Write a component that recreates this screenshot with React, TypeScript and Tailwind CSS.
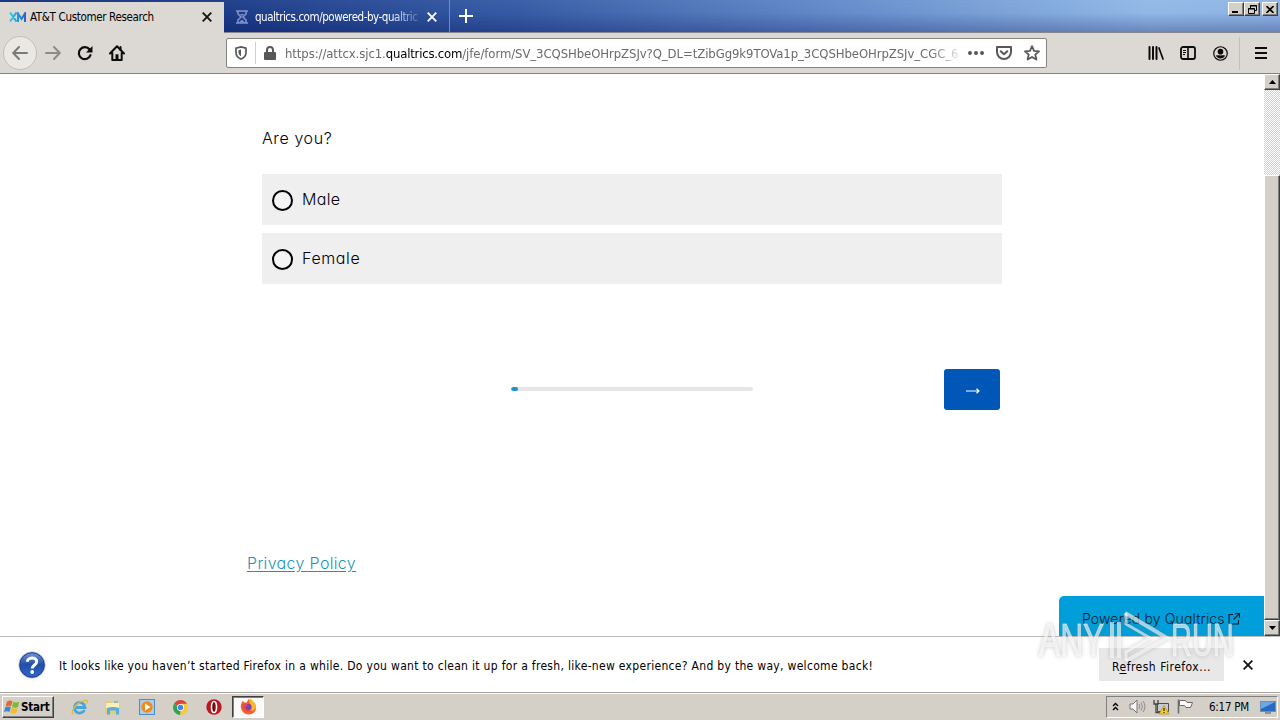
import React from "react";

const ui = "font-['DejaVu_Sans_Condensed','DejaVu_Sans',sans-serif] [font-stretch:condensed]";
const survey = "font-[Inter,'Open_Sans',sans-serif] font-light [font-feature-settings:'cv11','ss03']";
const bevel =
  "bg-[#d4d0c8] border border-t-white border-l-white border-r-[#404040] border-b-[#404040] shadow-[inset_-1px_-1px_0_#808080]";

function Close({ className = "" }: { className?: string }) {
  return (
    <svg className={className} width="10" height="10" viewBox="0 0 10 10" fill="none" stroke="currentColor" strokeWidth="1.8">
      <path d="M.7.7l8.6 8.6M9.3.7L.7 9.3" />
    </svg>
  );
}

function TabStrip() {
  return (
    <header className="flex h-[33px] shrink-0 items-start border-b border-[#85878c] bg-[linear-gradient(to_bottom,rgba(255,255,255,.04),rgba(0,0,30,0)_40%,rgba(0,10,80,.28)),linear-gradient(to_right,#14307c_0,#1c3b88_220px,#365ba5_520px,#6288c8_820px,#91b8e6_1150px,#8fb4e4_1280px)]">
      <div className="mt-[2px] flex h-[31px] w-[224px] shrink-0 items-center bg-[#dcd8d3] pb-[1px] pl-[9px]">
        <svg width="17" height="10" viewBox="0 0 17 10" fill="none" strokeWidth="2">
          <defs>
            <linearGradient id="xm" x1="0" x2="1">
              <stop offset="0" stopColor="#35c9d8" />
              <stop offset=".5" stopColor="#1e9be0" />
              <stop offset="1" stopColor="#2b63c8" />
            </linearGradient>
          </defs>
          <path d="M1 .5L7.500 9.500M7.500.5L1 9.500M9 10V1.500l3.500 5.500L16 1.500V10" stroke="url(#xm)" />
        </svg>
        <span className={`ml-[4px] text-[11.5px] leading-4 tracking-[-0.33px] whitespace-nowrap text-black ${ui}`}>AT&amp;T Customer Research</span>
        <Close className="mr-[12px] ml-auto text-[#111]" />
      </div>
      <div className="flex h-[32px] w-[226px] shrink-0 items-center border-r border-[#7589bb] pt-[2px] pl-[12px] text-white">
        <svg width="12" height="14" viewBox="0 0 12 14" fill="none" stroke="#8195cb" strokeWidth="1.6">
          <path d="M0 1h12M0 13h12M2 1v3l3 3-3 3v3M10 1v3L7 7l3 3v3" />
          <path d="M3 12.500l3-3 3 3zM4 4h4L6 6z" fill="#8195cb" stroke="none" />
        </svg>
        <span className={`ml-[7px] w-[164px] overflow-hidden text-[11.5px] leading-4 tracking-[-0.45px] whitespace-nowrap [mask-image:linear-gradient(to_right,#000_135px,transparent_170px)] ${ui}`}>
          qualtrics.com/powered-by-qualtric
        </span>
        <Close className="ml-[8px]" />
      </div>
      <svg className="mt-[9px] ml-[9px]" width="14" height="14" viewBox="0 0 14 14" stroke="#fff" strokeWidth="2">
        <path d="M7 0v14M0 7h14" />
      </svg>
      <div className="mt-[2px] mr-[2px] ml-auto flex">
        <div className={`flex h-[14px] w-[16px] items-end pb-[2px] pl-[3px] ${bevel}`}>
          <i className="h-[2px] w-[6px] bg-black" />
        </div>
        <div className={`flex h-[14px] w-[16px] items-center justify-center ${bevel}`}>
          <svg width="9" height="9" viewBox="0 0 9 9" fill="none" stroke="#000">
            <path d="M2.500 3V.5h6v5H6.500M2 1h7M.5 3.500h6v5h-6zM0 4h7" />
          </svg>
        </div>
        <div className={`ml-[2px] flex h-[14px] w-[16px] items-center justify-center ${bevel}`}>
          <svg width="8" height="7" viewBox="0 0 8 7" stroke="#000" strokeWidth="1.6">
            <path d="M.5 0l7 7M7.500 0l-7 7" />
          </svg>
        </div>
      </div>
    </header>
  );
}

function NavBar() {
  return (
    <nav className="flex h-[41px] shrink-0 items-center border-b border-[#84827e] bg-[#dcd8d3]">
      <div className="ml-[3px] flex size-[34px] shrink-0 items-center justify-center rounded-full border border-[#c2beba] bg-[#eae8e5]">
        <svg width="16" height="14" viewBox="0 0 16 14" fill="none" stroke="#7c7a77" strokeWidth="2" strokeLinecap="round" strokeLinejoin="round">
          <path d="M15 7H1.500M7 1L1.200 7 7 13" />
        </svg>
      </div>
      <svg className="ml-[8px] shrink-0" width="16" height="14" viewBox="0 0 16 14" fill="none" stroke="#8d8a87" strokeWidth="2" strokeLinecap="round" strokeLinejoin="round">
        <path d="M1 7h13.500M9 1l5.800 6L9 13" />
      </svg>
      <svg className="ml-[16px] shrink-0" width="16" height="16" viewBox="0 0 16 16" fill="none" stroke="#0c0c0d" strokeWidth="2.200" strokeLinecap="round">
        <path d="M13.500 10.200A6 6 0 1 1 12.600 4.500" />
        <path d="M15.500 1v6.500H9z" fill="#0c0c0d" stroke="none" />
      </svg>
      <svg className="ml-[16px] shrink-0" width="16" height="16" viewBox="0 0 16 16" fill="none" stroke="#0c0c0d" strokeWidth="2" strokeLinecap="round" strokeLinejoin="round">
        <path d="M1 8.500L8 1.300l7 7.200M3.300 8v7h9.400V8" />
        <path d="M6.500 14.500V9.300h3v5.200z" fill="#0c0c0d" stroke="none" />
        <path d="M11.500 2v3" />
      </svg>
      <div className="ml-[101px] flex h-[30px] w-[821px] shrink-0 items-center rounded-[2px] border border-[#858380] bg-white">
        <svg className="ml-[8px]" width="12" height="14" viewBox="0 0 12 14" fill="none" stroke="#58585a" strokeWidth="1.700">
          <path d="M6 .9L11 2.200v4.300c0 3-2 5.300-5 6.500C3 11.800 1 9.500 1 6.500V2.200z" />
          <path d="M6 3.500v6.800C4.300 9.300 3.500 8 3.500 6.500V4.200z" fill="#58585a" stroke="none" />
        </svg>
        <i className="ml-[8px] h-[22px] w-px bg-[#cfcfcf]" />
        <svg className="ml-[8px]" width="12" height="14" viewBox="0 0 12 14">
          <path d="M3 7V4a3 3 0 0 1 6 0v3" fill="none" stroke="#58585a" strokeWidth="2" />
          <rect y="6" width="12" height="8" rx="1" fill="#58585a" />
        </svg>
        <div className={`mt-[2px] ml-[9px] w-[675px] overflow-hidden text-[13px] leading-5 tracking-[-0.08px] whitespace-nowrap text-[#6a6a6a] [mask-image:linear-gradient(to_right,#000_645px,transparent_680px)] ${ui}`}>
          https://attcx.sjc1.<span className="tracking-[-0.2px] text-black">qualtrics.com</span>/jfe/form/SV_3CQSHbeOHrpZSJv?Q_DL=tZibGg9k9TOVa1p_3CQSHbeOHrpZSJv_CGC_6
        </div>
        <svg className="ml-[8px]" width="16" height="4" viewBox="0 0 16 4" fill="#58585a">
          <circle cx="2" cy="2" r="2" />
          <circle cx="8" cy="2" r="2" />
          <circle cx="14" cy="2" r="2" />
        </svg>
        <svg className="ml-[12px]" width="16" height="14" viewBox="0 0 16 14" fill="none" stroke="#58585a" strokeWidth="2" strokeLinecap="round" strokeLinejoin="round">
          <path d="M1 1h14v5a7 7 0 0 1-14 0z" />
          <path d="M4.700 5.200L8 8.200l3.300-3" />
        </svg>
        <svg className="ml-[12px]" width="16" height="16" viewBox="0 0 16 16" fill="none" stroke="#58585a" strokeWidth="1.800" strokeLinejoin="round">
          <path d="M8 1.200l2 4.600 5 .5-3.700 3.300 1.100 5L8 12l-4.400 2.600 1.100-5L1 6.300l5-.5z" />
        </svg>
      </div>
      <svg className="ml-[101px] shrink-0" width="16" height="14" viewBox="0 0 16 14" stroke="#0c0c0d" strokeWidth="2" strokeLinecap="round">
        <path d="M1.500 1v12M5 1v12M8.500 1v12" />
        <path d="M11 2l4 11" strokeWidth="1.700" />
      </svg>
      <svg className="ml-[16px] shrink-0" width="16" height="14" viewBox="0 0 16 14" fill="none" stroke="#0c0c0d" strokeWidth="1.800">
        <rect x="1" y="1" width="14" height="12" rx="2" />
        <path d="M8 1v12" strokeWidth="1.600" />
        <path d="M3 4.500h3M3 6.500h3M3 8.500h2" strokeWidth="1" />
      </svg>
      <svg className="ml-[17px] shrink-0" width="15" height="15" viewBox="0 0 16 16" fill="none" stroke="#0c0c0d" strokeWidth="1.300">
        <circle cx="8" cy="8" r="7.200" />
        <circle cx="8" cy="6" r="3" fill="#0c0c0d" stroke="none" />
        <path d="M3 10.500c1.500-1 2.500-.5 5-.5s3.500-.5 5 .5a5.800 5.800 0 0 1-10 0z" fill="#0c0c0d" stroke="none" />
      </svg>
      <i className="ml-[11px] h-[33px] w-px bg-[#c4c0bb]" />
      <svg className="ml-[15px] shrink-0" width="12" height="12" viewBox="0 0 12 12" stroke="#0c0c0d" strokeWidth="2">
        <path d="M0 1h12M0 6h12M0 11h12" />
      </svg>
    </nav>
  );
}

function Choice({ label, tracking }: { label: string; tracking: string }) {
  return (
    <label className="flex h-[51px] items-center bg-[#efefef] pl-[10px]">
      <span className="mt-[1px] size-[21px] rounded-full border-2 border-black bg-[#f4f4f4]" />
      <span className={`mb-[2px] ml-[9px] text-[16px] text-black ${tracking} ${survey}`}>{label}</span>
    </label>
  );
}

function Arrow({ down = false }: { down?: boolean }) {
  return (
    <div className={`flex h-[16px] shrink-0 items-center justify-center ${bevel}`}>
      <svg width="7" height="4" viewBox="0 0 7 4">
        <path d={down ? "M0 0h7L3.500 4z" : "M0 4h7L3.500 0z"} />
      </svg>
    </div>
  );
}

function Page() {
  return (
    <main className="flex h-[562px] shrink-0 bg-white">
      <div className="relative min-w-0 flex-1">
        <div className="ml-[262px] flex w-[740px] flex-col pt-[52px]">
          <p className={`h-[24px] text-[16px] leading-6 tracking-[0.6px] text-black ${survey}`}>Are you?</p>
          <div className="mt-[24px] flex flex-col gap-[8px]">
            <Choice label="Male" tracking="tracking-[0.35px]" />
            <Choice label="Female" tracking="tracking-[0.6px]" />
          </div>
          <div className="mt-[85px] flex h-[41px] items-center pr-[2px]">
            <div className="mb-[1px] ml-[249px] flex h-[4px] w-[242px] overflow-hidden rounded-full bg-[#e6e6e6]">
              <i className="w-[7px] rounded-full bg-[#1e94cb]" />
            </div>
            <button className="ml-auto flex h-[41px] w-[56px] items-center justify-center rounded-[3px] bg-[#0057b8] pt-[3px] pl-[2px]">
              <svg width="14" height="6" viewBox="0 0 14 6" fill="none" stroke="#fff" strokeWidth="1.200">
                <path d="M0 3h13M10.500.7L13 3l-2.500 2.300" />
              </svg>
            </button>
          </div>
          <a className={`mt-[141px] -ml-[15px] self-start text-[16px] leading-6 tracking-[0.33px] text-[#1c93ba] underline underline-offset-2 ${survey}`}>Privacy Policy</a>
        </div>
        <div className="absolute right-0 bottom-0 flex h-[40px] w-[205px] items-center rounded-tl-[5px] bg-[#009fdb] pt-[5px] pl-[23px]">
          <span className={`text-[14px] tracking-[0.15px] whitespace-nowrap text-[#0a1c28] ${survey}`}>Powered by Qualtrics</span>
          <svg className="ml-[3px]" width="12" height="12" viewBox="0 0 12 12" fill="none" stroke="#0a1c28" strokeWidth="1.100">
            <path d="M5 1.500H1v9.500h9.500V7M7 .6h4.400V5M11.400.6L5.500 6.500" />
          </svg>
        </div>
      </div>
      <div className="flex w-[16px] shrink-0 flex-col bg-[repeating-conic-gradient(#d4d0c8_0_25%,#fff_0_50%)] bg-[size:2px_2px]">
        <Arrow />
        <div className={`mt-[85px] flex-1 ${bevel}`} />
        <Arrow down />
      </div>
    </main>
  );
}

function Notice() {
  return (
    <section className="relative flex h-[56px] shrink-0 items-center border-t border-[#bdbdbd] bg-white">
      <svg className="ml-[18px] shrink-0" width="28" height="28" viewBox="0 0 28 28">
        <defs>
          <linearGradient id="q" x2="0" y2="1">
            <stop stopColor="#6f94d4" />
            <stop offset=".48" stopColor="#244fa8" />
            <stop offset="1" stopColor="#2c67cc" />
          </linearGradient>
        </defs>
        <circle cx="14" cy="14" r="13.500" fill="#b3bfd6" />
        <circle cx="14" cy="14" r="12.300" fill="url(#q)" stroke="#1c3f93" />
        <path d="M9.300 10.800c.2-5 9.600-5 9.400 0 0 3.200-4.500 3.200-4.500 6.700" fill="none" stroke="#fff" strokeWidth="3" />
        <circle cx="14.200" cy="21" r="1.900" fill="#fff" />
      </svg>
      <p className={`mt-[2px] ml-[13px] w-[816px] shrink-0 text-[12px] tracking-[0.31px] whitespace-nowrap text-black ${ui}`}>
        It looks like you haven’t started Firefox in a while. Do you want to clean it up for a fresh, like-new experience? And by the way, welcome back!
      </p>
      <Watermark />
      <button className="ml-[224px] h-[33px] w-[125px] shrink-0 bg-[#e4e4e4]/85">
        <span className={`relative text-[12px] tracking-[0.5px] whitespace-nowrap text-black ${ui}`}>
          R<u className="underline-offset-2">e</u>fresh Firefox...
        </span>
      </button>
      <Close className="ml-[19px] shrink-0 text-[#111]" />
    </section>
  );
}

function Watermark() {
  return (
    <div className="pointer-events-none absolute top-[-30px] left-[1039px] flex h-[64px] w-[196px] items-center justify-between font-['Liberation_Sans_Narrow','Liberation_Sans',sans-serif] text-[46px] leading-none text-white/60 [-webkit-text-stroke:1px_rgba(255,255,255,.5)] [filter:drop-shadow(0_0_2px_rgba(110,110,110,.6))]">
      <span className="w-[68px] pt-[2px]"><span className="inline-block origin-left scale-x-[.69]">ANY</span></span>
      <svg className="shrink-0" width="62" height="62" viewBox="0 0 62 62" fill="none" stroke="#fff" strokeOpacity=".6" strokeWidth="4">
        <path d="M4 14v36M11 14v36M17 5L59 30 18 53" />
        <path d="M18 5v11l24 14-24 14v9" strokeWidth="3" />
      </svg>
      <span className="w-[64px] pt-[2px]"><span className="inline-block origin-left scale-x-[.63]">RUN</span></span>
    </div>
  );
}

function Taskbar() {
  return (
    <footer className="flex h-[28px] shrink-0 items-center border-t border-[#aaa69f] bg-[#d4d0c8] shadow-[inset_0_1px_0_#fff]">
      <button className={`ml-[2px] flex h-[22px] w-[52px] shrink-0 items-center pl-[1px] ${bevel}`}>
        <svg className="shrink-0" width="16" height="16" viewBox="0 0 16 16">
          <path d="M3 2.500q3-2 5.500-.2L7 7.500Q4.500 6 1.500 7.500z" fill="#e8672a" />
          <path d="M9.300 2.800q3 1.500 6-.3L14 8q-3 1.500-6-.1z" fill="#7db93c" />
          <path d="M1.300 8.300q3-1.500 5.500 0L5.500 13Q3 11.700 0 13z" fill="#3c86d0" />
          <path d="M7.700 8.700q3 1.500 6 .2L12.300 14q-3 1.300-6-.5z" fill="#f2bd27" />
        </svg>
        <span className="mt-[2px] ml-[1px] text-[11.5px] font-bold tracking-[-0.2px] text-black font-['DejaVu_Sans_Condensed','DejaVu_Sans',sans-serif] [font-stretch:condensed]">Start</span>
      </button>
      <svg className="mt-[1px] ml-[17px]" width="17" height="16" viewBox="0 0 17 16" fill="none">
        <path d="M13.500 11A5.300 5.300 0 1 1 14 8.500H5" stroke="#45a5df" strokeWidth="2.800" />
        <path d="M2.500 15C-2 14 6 2 15 1.200c2 .2 1 2.500.5 3.300" stroke="#e6b93a" strokeWidth="1.300" />
      </svg>
      <svg className="mt-[1px] ml-[17px]" width="16" height="16" viewBox="0 0 16 16">
        <path d="M0 2h6l1 2h8v11H0z" fill="#e9cd6c" />
        <path d="M1 4h13v5H1z" fill="#f9efb9" />
        <path d="M2 15.500V9q6-2 12 0v6.500h-3v-4H5v4z" fill="#58aee0" />
        <path d="M9 3h4" stroke="#5aac55" />
      </svg>
      <svg className="mt-[1px] ml-[18px]" width="17" height="17" viewBox="0 0 17 17">
        <rect x=".5" y=".5" width="15" height="15" fill="#a9cdec" stroke="#4d8bc3" />
        <circle cx="8" cy="8" r="5.700" fill="#f08a1d" />
        <path d="M6 4.500v7L11.500 8z" fill="#fff" />
      </svg>
      <svg className="mt-[1px] ml-[17px]" width="15" height="15" viewBox="0 0 16 16">
        <path d="M8 8L1.100 4A8 8 0 0 1 14.900 4z" fill="#dc4336" />
        <path d="M8 8L1.100 4A8 8 0 0 0 8 16z" fill="#32a350" />
        <path d="M8 8V4h6.900A8 8 0 0 1 8 16z" fill="#f7cb36" />
        <circle cx="8" cy="8" r="3.700" fill="#fff" />
        <circle cx="8" cy="8" r="2.900" fill="#4285e8" />
      </svg>
      <svg className="mt-[1px] ml-[18px]" width="16" height="16" viewBox="0 0 16 16">
        <circle cx="8" cy="8" r="7.700" fill="#bb1822" />
        <ellipse cx="8" cy="8" rx="2.500" ry="5.500" fill="#6e0b11" stroke="#fff" strokeWidth="1.600" />
      </svg>
      <div className="ml-[10px] flex h-[22px] w-[32px] items-center justify-center border border-t-[#404040] border-r-white border-b-white border-l-[#404040] bg-[#fbfafa] shadow-[inset_1px_1px_0_#808080]">
        <svg width="17" height="17" viewBox="0 0 16 16">
          <path d="M8 15.500A7.200 7.200 0 0 1 .8 8.500C.8 5 2 4.500 2.500 2.500l2 2 2-.5L8 1c1 2 3 2 3.500 3.500l1-1C17.500 8 15 15.500 8 15.500z" fill="#f2622b" />
          <path d="M9 .5c2 .5 6 4 6 8.500-1 2.500-4 4-6.500 3C12 11 12 7 9 5z" fill="#fdb92b" />
          <circle cx="7.500" cy="8.500" r="3.100" fill="#7644b5" />
          <path d="M2 6c2-1 4-.5 5.500 1L5 8.500c0 3 4 4 6 2-1 4-8.500 3.500-9-4.500z" fill="#f04a3f" />
        </svg>
      </div>
      <div className="mr-[2px] ml-auto flex h-[22px] w-[172px] items-center border border-t-[#808080] border-r-white border-b-white border-l-[#808080]">
        <svg className="ml-[5px]" width="7" height="9" viewBox="0 0 7 9" fill="none" stroke="#000" strokeWidth="1.400">
          <path d="M1 4l2.500-2.500L6 4M1 8l2.500-2.500L6 8" />
        </svg>
        <svg className="ml-[10px]" width="17" height="15" viewBox="0 0 17 15" fill="none" stroke="#777" strokeWidth="1">
          <path d="M1 5h3l4-4v13l-4-4H1z" fill="#f6f6f6" />
          <path d="M10 5q1.500 2.500 0 5M12 3.500q3 4 0 8M14 2q4 5.500 0 11" stroke="#8b8b8b" />
        </svg>
        <svg className="ml-[7px]" width="17" height="16" viewBox="0 0 17 16">
          <path d="M4.500 4.500h11v8h-11z" fill="#c3cbd4" stroke="#4e4e4e" />
          <path d="M1 1v4h4V1M3 5v8.500h4" fill="none" stroke="#444" strokeWidth="1.300" />
          <path d="M11 6.500l5 8.500H6z" fill="#f9cf25" stroke="#bd8c00" strokeWidth=".7" />
          <path d="M11 9v3M11 13v1" stroke="#222" strokeWidth="1.200" />
        </svg>
        <svg className="ml-[7px]" width="17" height="15" viewBox="0 0 17 15" fill="#fafafa" stroke="#6b6b6b">
          <path d="M1.500.5v14" strokeWidth="1.600" />
          <path d="M2.500 1.500h6l1.500 2h5.500l-2 5H9l-1.500-2h-5z" />
        </svg>
        <span className={`mt-[2px] ml-[15px] text-[11.500px] tracking-[-0.25px] whitespace-nowrap text-black ${ui}`}>6:17 PM</span>
        <svg className="mt-[1px] mr-[1px] ml-auto" width="16" height="13" viewBox="0 0 16 13">
          <rect x=".5" y=".5" width="15" height="10" fill="#286ac0" stroke="#6d8eb6" />
          <path d="M1 1h14L1 8z" fill="#6da8e4" />
          <path d="M5 11.500h6v1H5z" fill="#3f5675" />
        </svg>
      </div>
    </footer>
  );
}

export default function App() {
  return (
    <div className="flex h-[720px] w-[1280px] flex-col overflow-hidden bg-white">
      <TabStrip />
      <NavBar />
      <Page />
      <Notice />
      <Taskbar />
    </div>
  );
}
